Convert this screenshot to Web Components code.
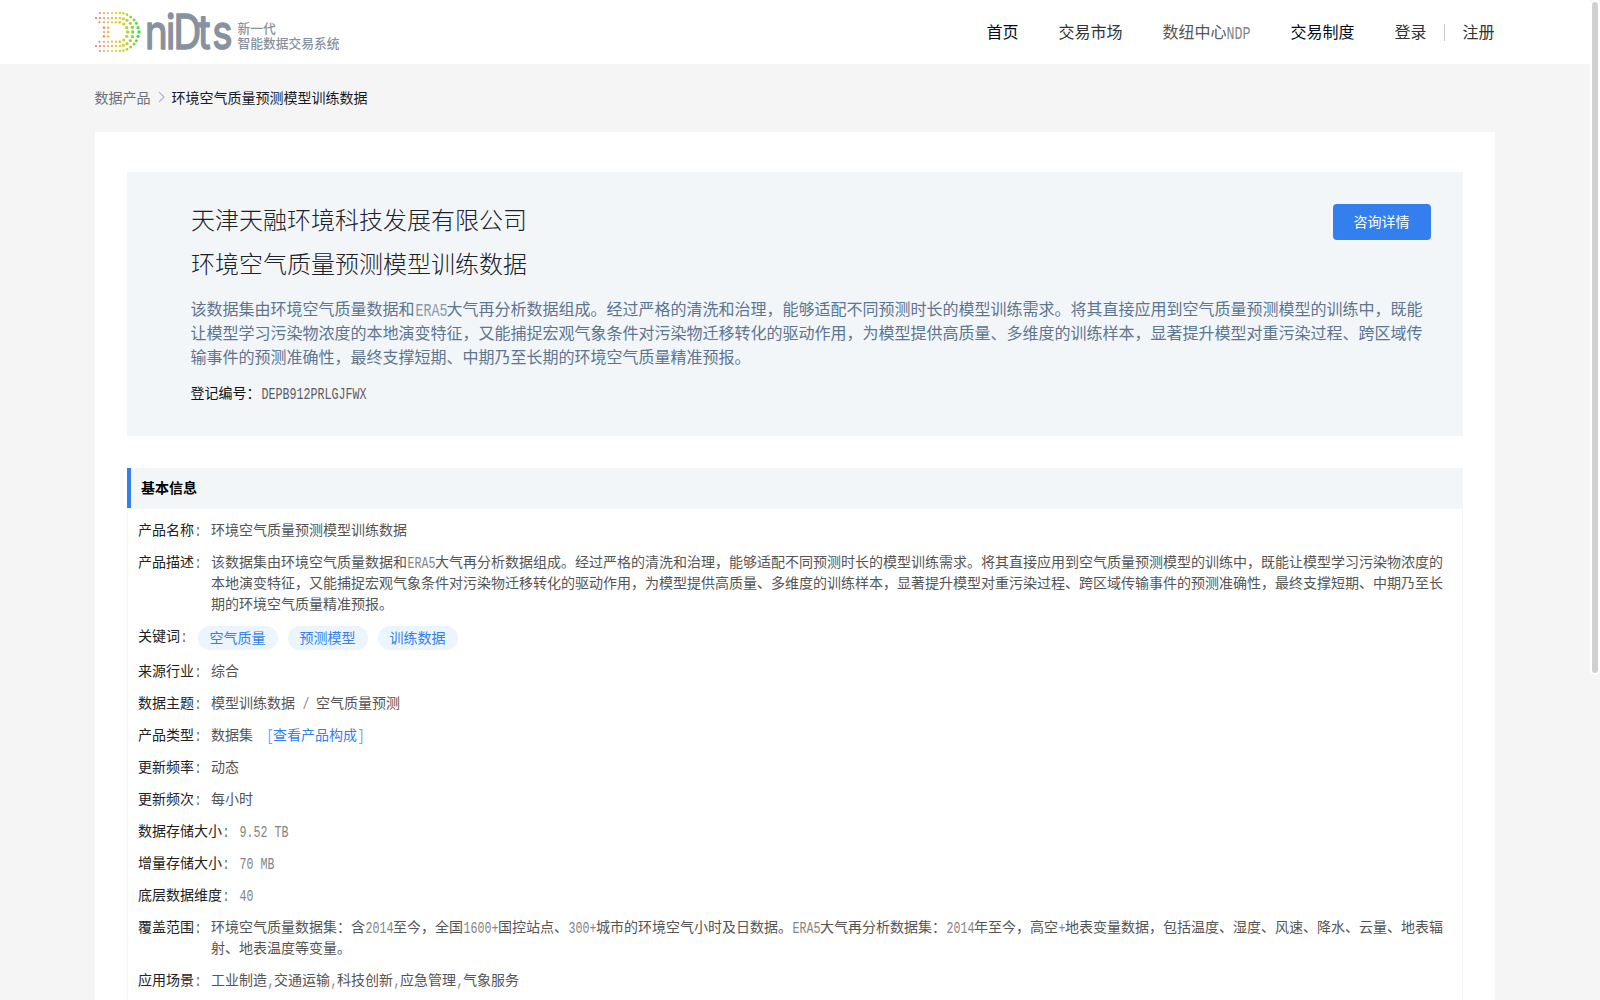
<!DOCTYPE html>
<html lang="zh-CN">
<head>
<meta charset="utf-8">
<title>环境空气质量预测模型训练数据</title>
<style>
html,body{margin:0;height:100%;overflow:hidden}
body{background:#f5f5f5;font-family:"Noto Sans CJK SC","Liberation Sans",sans-serif;font-weight:400;font-size:14px;color:#555;text-spacing-trim:space-all;font-kerning:none}
</style>
</head>
<body>
<page-shell>
  <site-header slot="header">
    <nav-link tone="dark">首页</nav-link>
    <nav-link>交易市场</nav-link>
    <nav-link tone="soft">数纽中心<half-run>NDP</half-run></nav-link>
    <nav-link tone="dark">交易制度</nav-link>
    <nav-link slot="account">登录</nav-link>
    <nav-link slot="account">注册</nav-link>
  </site-header>
  <bread-crumb><span slot="parent">数据产品</span><span slot="current">环境空气质量预测模型训练数据</span></bread-crumb>
  <content-card>
    <product-hero>
      <span slot="company">天津天融环境科技发展有限公司</span>
      <span slot="name">环境空气质量预测模型训练数据</span>
      <span slot="action">咨询详情</span>
      <span slot="desc">该数据集由环境空气质量数据和<half-run>ERA5</half-run>大气再分析数据组成。经过严格的清洗和治理，能够适配不同预测时长的模型训练需求。将其直接应用到空气质量预测模型的训练中，既能<br>让模型学习污染物浓度的本地演变特征，又能捕捉宏观气象条件对污染物迁移转化的驱动作用，为模型提供高质量、多维度的训练样本，显著提升模型对重污染过程、跨区域传<br>输事件的预测准确性，最终支撑短期、中期乃至长期的环境空气质量精准预报。</span>
      <span slot="code-label">登记编号：</span>
      <half-run slot="code">DEPB912PRLGJFWX</half-run>
    </product-hero>
    <info-section>
      <span slot="title">基本信息</span>
      <info-row label="产品名称">环境空气质量预测模型训练数据</info-row>
      <info-row label="产品描述">该数据集由环境空气质量数据和<half-run>ERA5</half-run>大气再分析数据组成。经过严格的清洗和治理，能够适配不同预测时长的模型训练需求。将其直接应用到空气质量预测模型的训练中，既能让模型学习污染物浓度的<br>本地演变特征，又能捕捉宏观气象条件对污染物迁移转化的驱动作用，为模型提供高质量、多维度的训练样本，显著提升模型对重污染过程、跨区域传输事件的预测准确性，最终支撑短期、中期乃至长<br>期的环境空气质量精准预报。</info-row>
      <info-row label="关键词"><tag-list><tag-pill>空气质量</tag-pill><tag-pill>预测模型</tag-pill><tag-pill>训练数据</tag-pill></tag-list></info-row>
      <info-row label="来源行业">综合</info-row>
      <info-row label="数据主题">模型训练数据<half-run> / </half-run>空气质量预测</info-row>
      <info-row label="产品类型">数据集<text-link><half-run>[</half-run>查看产品构成<half-run>]</half-run></text-link></info-row>
      <info-row label="更新频率">动态</info-row>
      <info-row label="更新频次">每小时</info-row>
      <info-row label="数据存储大小"><half-run>9.52 TB</half-run></info-row>
      <info-row label="增量存储大小"><half-run>70 MB</half-run></info-row>
      <info-row label="底层数据维度"><half-run>40</half-run></info-row>
      <info-row label="覆盖范围">环境空气质量数据集：含<half-run>2014</half-run>至今，全国<half-run>1600+</half-run>国控站点、<half-run>300+</half-run>城市的环境空气小时及日数据。<half-run>ERA5</half-run>大气再分析数据集：<half-run>2014</half-run>年至今，高空<half-run>+</half-run>地表变量数据，包括温度、湿度、风速、降水、云量、地表辐<br>射、地表温度等变量。</info-row>
      <info-row label="应用场景">工业制造<half-run>,</half-run>交通运输<half-run>,</half-run>科技创新<half-run>,</half-run>应急管理<half-run>,</half-run>气象服务</info-row>
    </info-section>
  </content-card>
</page-shell>
<scroll-thumb></scroll-thumb>
<script>
const define = (name, html, setup) => {
  const template = document.createElement('template');
  template.innerHTML = html;
  customElements.define(name, class extends HTMLElement {
    constructor() {
      super();
      this.attachShadow({ mode: 'open' }).append(template.content.cloneNode(true));
    }
    connectedCallback() { if (setup) setup(this, this.shadowRoot); }
  });
};

// Latin characters set in cells half an em wide.
define('half-run', `<style>
:host{display:inline-block;white-space:pre;line-height:1;opacity:.72}
span{display:inline-block;font:400 1.14em/1 "Liberation Mono",monospace;transform:translate(.5px,.5px) scaleX(.731);transform-origin:0 50%}
</style><span><slot></slot></span>`, host => {
  host.style.width = host.textContent.length * .5 + 'em';
});

define('page-shell', `<style>
:host{display:block;width:1590px;height:1000px;overflow:hidden}
main{width:1400px;margin:0 auto}
</style><slot name="header"></slot><main><slot></slot></main>`);

define('brand-logo', `<style>
:host{display:flex;align-items:flex-start;height:64px;color:#8792a0}
svg{display:block;flex:none}
.tag{padding-top:19.5px;margin-left:5.5px;font:500 12.75px/15.5px "Noto Sans CJK SC",sans-serif;white-space:nowrap}
.tag div{height:15.5px}
</style>
<svg width="140" height="64" viewBox="92 0 140 64" overflow="visible">
<defs><linearGradient id="g" gradientUnits="userSpaceOnUse" x1="95" y1="0" x2="141" y2="0">
<stop offset="0" stop-color="#f0567c"/><stop offset=".1" stop-color="#f57c5c"/><stop offset=".3" stop-color="#f2b04a"/><stop offset=".48" stop-color="#e2cc2c"/><stop offset=".65" stop-color="#c8d42e"/><stop offset=".83" stop-color="#86d43a"/><stop offset="1" stop-color="#2fd868"/>
</linearGradient></defs>
<g id="dots" fill="url(#g)"></g>
<text transform="translate(0 49.3) scale(.8 1)" font-family="Inter" font-size="48" font-weight="400" fill="currentColor" stroke="currentColor" stroke-width="1.6" stroke-linejoin="round" x="181.3 207.5 216.8 247.6 265.2">niDts</text>
</svg>
<div class="tag"><div>新一代</div><div>智能数据交易系统</div></div>`, (host, root) => {
  const upper = [
    [24,15,1],[36,15,1],[48,15,1],[60,15,1],[72,15,1.1],[84,15,1.2],[94,16,1.3],[105,20,1.4],[116,27,1.5],[126,36,1.5],[133,46,1.5],[138,59,1.6],
    [12,30,1],[24,30,1.1],[36,30,1.1],[48,30,1.1],[60,30,1.2],[72,30,1.2],[84,30,1.3],[94,32,1.5],[105,37,1.6],[115,46,1.6],[121,58,1.7],
    [22,43,1],[36,43,1],[48,43,1],[60,43,1.1],[72,43,1.2],[83,43,1.4],[95,48,1.6],[104,59,1.7],
    [36,59,1.3],[48,59,1.2]
  ];
  const all = [...upper, ...upper.map(([x, y, r]) => [x, 144 - y, r]), [36,72,1], [48,72,1.2], [141,72,1.7], [122,72,1.7], [107,72,1.8]];
  const group = root.getElementById('dots');
  for (const [x, y, r] of all) {
    const c = document.createElementNS('http://www.w3.org/2000/svg', 'circle');
    c.setAttribute('cx', 92 + x / 3);
    c.setAttribute('cy', 8 + y / 3);
    c.setAttribute('r', r);
    group.append(c);
  }
});

define('site-header', `<style>
:host{display:block;background:#fff;height:64px}
.bar{width:1400px;height:64px;margin:0 auto;display:flex;justify-content:space-between}
brand-logo{margin-left:-3px}
nav,.account{display:flex;align-items:center}
nav{gap:40px;margin-right:.5px}
.account{gap:36px;background:linear-gradient(#ccc,#ccc) 50px 50%/1px 17px no-repeat}
</style>
<div class="bar"><brand-logo></brand-logo><nav><slot></slot><div class="account"><slot name="account"></slot></div></nav></div>`);

define('nav-link', `<style>
:host{display:block;font-size:16px;line-height:24px;color:#333;white-space:nowrap;padding-bottom:3px}
:host([tone=dark]){color:#000c22}
:host([tone=soft]){color:#555}
</style><slot></slot>`);

define('bread-crumb', `<style>
:host{display:flex;align-items:center;height:68px;box-sizing:border-box;line-height:20px;color:#6c707a;padding-bottom:3px;margin-left:-.5px}
svg{margin:1px 5px 0 6px}
.current{color:#171a26}
</style><slot name="parent"></slot><svg width="10" height="12" viewBox="0 0 10 12" fill="none" stroke="#b4b7bf" stroke-width="1.2"><path d="M2 1l5 5-5 5"/></svg><div class="current"><slot name="current"></slot></div>`);

define('content-card', `<style>
:host{display:block;background:#fff;padding:40px 32px;height:900px;box-sizing:border-box}
</style><slot></slot>`);

define('product-hero', `<style>
:host{display:block;height:264px;box-sizing:border-box;background:#f2f6f9;padding:25px 32px 0 64px;color:#1d2129}
.top{display:flex;justify-content:space-between;align-items:flex-start}
.title{font-size:24px;font-weight:300;line-height:44px;height:88px}
.button{margin-top:7px;width:98px;height:36px;line-height:34px;border-radius:4px;background:#347fee;color:#fff;text-align:center;text-indent:-1px}
.desc{font-size:16px;line-height:24px;color:#5d7590;margin:11px 0 0 -.5px;white-space:nowrap}
.code{margin:14px 0 0 -.5px;line-height:20px;white-space:nowrap}
.label{color:#111}
</style>
<div class="top"><div class="title"><div><slot name="company"></slot></div><div><slot name="name"></slot></div></div><div class="button"><slot name="action"></slot></div></div>
<div class="desc"><slot name="desc"></slot></div>
<div class="code"><span class="label"><slot name="code-label"></slot></span><slot name="code"></slot></div>`);

define('info-section', `<style>
:host{display:block;margin-top:32px}
header{height:40px;line-height:38px;border-left:4px solid #347fee;padding-left:10px;background:#f2f6f9;color:#000;font-weight:700}
.body{display:flex;flex-direction:column;gap:11px;border:1px solid #f2f6f9;padding:10px 10px;height:520px}
</style><header><slot name="title"></slot></header><div class="body"><slot></slot></div>`);

define('info-row', `<style>
:host{display:flex;line-height:21px;color:#555;white-space:nowrap;flex:none}
.label{color:#222;flex:none;margin-right:10px;height:21px}
</style><div class="label"></div><div><slot></slot></div>`, (host, root) => {
  const colon = document.createElement('half-run');
  colon.textContent = ':';
  root.querySelector('.label').replaceChildren(host.getAttribute('label'), colon);
  colon.style.width = '.5em';
});

define('tag-list', `<style>:host{display:flex;gap:10px;margin:1px 0 -1px 1px}</style><slot></slot>`);
define('tag-pill', `<style>
:host{display:block;width:80px;height:24px;line-height:22px;border-radius:12px;background:#ecf5fd;color:#347fee;text-align:center;text-indent:-1px}
</style><slot></slot>`);
define('text-link', `<style>:host{color:#347fee;margin-left:13px}</style><slot></slot>`);

define('scroll-thumb', `<style>
:host{position:absolute;top:0;right:0;box-sizing:border-box;width:10px;height:675px;border:2px solid #fff;border-radius:5px;background:#d0d0d0}
</style>`);
</script>
</body>
</html>
